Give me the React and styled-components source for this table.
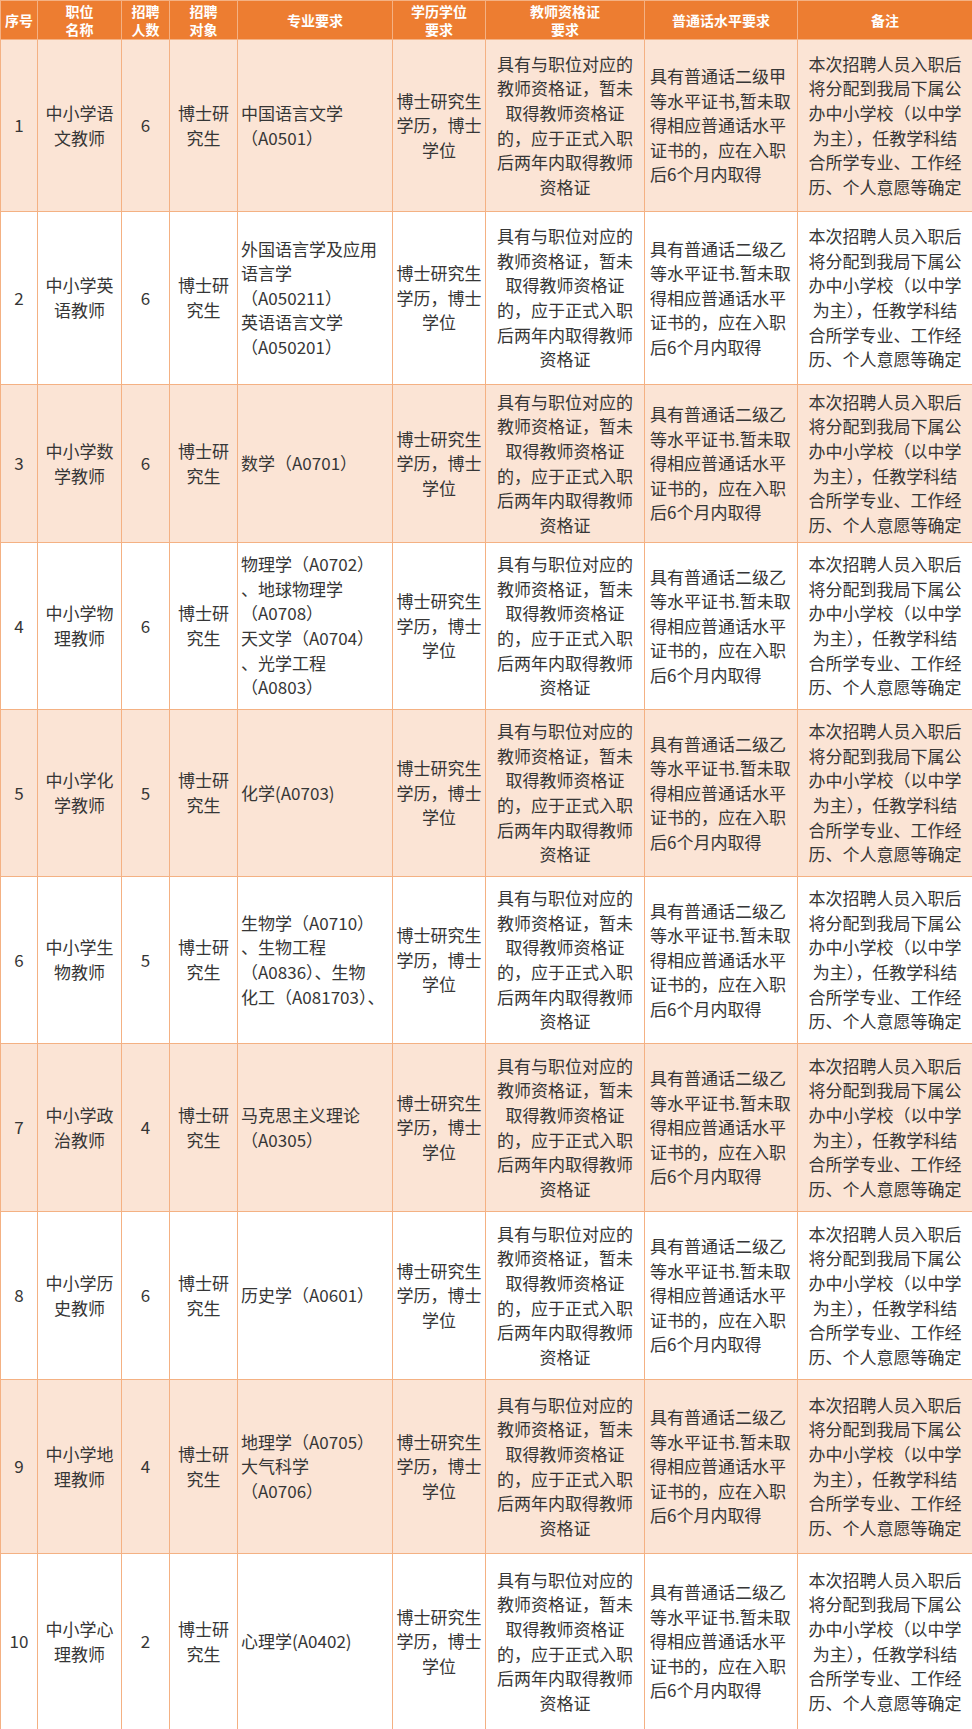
import React from "react";
import styled, { createGlobalStyle } from "styled-components";

const GlobalStyle = createGlobalStyle`
    html, body {
        margin: 0;
        padding: 0;
        background: #ffffff;
    }
    body {
        font-family: "Noto Sans CJK SC", "Noto Sans", sans-serif;
    }
`;

const Table = styled.table`
    width: 972px;
    border-collapse: collapse;
    table-layout: fixed;
`;

const Col = styled.col`
    width: ${(p) => p.$w}px;
`;

const HeadCell = styled.th`
    height: 38px;
    padding: 0 2px;
    background: #ed7d31;
    border: 1px solid #f4b183;
    color: #ffffff;
    font-size: 14px;
    font-weight: 700;
    line-height: 18px;
    text-align: center;
    vertical-align: middle;
`;

const Row = styled.tr`
    height: ${(p) => p.$h}px;
    background: ${(p) => (p.$shade ? "#fbe4d5" : "#ffffff")};
`;

const Cell = styled.td`
    padding: ${(p) => p.$pad || "0 3px"};
    border: 1px solid #f4b183;
    color: #363636;
    font-size: 17px;
    line-height: 24.6px;
    text-align: ${(p) => p.$align || "center"};
    vertical-align: middle;
    white-space: nowrap;
    overflow: visible;
`;

const Line = styled.span`
    display: block;
`;

const Lines = ({ items }) => (
    <>
        {items.map((t, i) => (
            <Line key={i}>{t}</Line>
        ))}
    </>
);

// 공통 문구
const EDU = ["博士研究生", "学历，博士", "学位"];
const CERT = [
    "具有与职位对应的",
    "教师资格证，暂未",
    "取得教师资格证",
    "的，应于正式入职",
    "后两年内取得教师",
    "资格证",
];
const NOTE = [
    "本次招聘人员入职后",
    "将分配到我局下属公",
    "办中小学校（以中学",
    "为主），任教学科结",
    "合所学专业、工作经",
    "历、个人意愿等确定",
];
const mandarin = (level, sep) => [
    `具有普通话二级${level}`,
    `等水平证书${sep}暂未取`,
    "得相应普通话水平",
    "证书的，应在入职",
    "后6个月内取得",
];

const HEADERS = [
    ["序号"],
    ["职位", "名称"],
    ["招聘", "人数"],
    ["招聘", "对象"],
    ["专业要求"],
    ["学历学位", "要求"],
    ["教师资格证", "要求"],
    ["普通话水平要求"],
    ["备注"],
];

const WIDTHS = [37, 84, 48, 68, 155, 93, 159, 153, 175];

const ROWS = [
    { h: 172, title: ["中小学语", "文教师"], count: "6", major: ["中国语言文学", "（A0501）"], level: "甲", sep: "," },
    { h: 173, title: ["中小学英", "语教师"], count: "6", major: ["外国语言学及应用", "语言学", "（A050211）", "英语语言文学", "（A050201）"] },
    { h: 158, title: ["中小学数", "学教师"], count: "6", major: ["数学（A0701）"] },
    { h: 167, title: ["中小学物", "理教师"], count: "6", major: ["物理学（A0702）", "、地球物理学", "（A0708）", "天文学（A0704）", "、光学工程", "（A0803）"] },
    { h: 167, title: ["中小学化", "学教师"], count: "5", major: ["化学(A0703)"] },
    { h: 167, title: ["中小学生", "物教师"], count: "5", major: ["生物学（A0710）", "、生物工程", "（A0836）、生物", "化工（A081703）、"] },
    { h: 168, title: ["中小学政", "治教师"], count: "4", major: ["马克思主义理论", "（A0305）"] },
    { h: 168, title: ["中小学历", "史教师"], count: "6", major: ["历史学（A0601）"] },
    { h: 174, title: ["中小学地", "理教师"], count: "4", major: ["地理学（A0705）", "大气科学", "（A0706）"] },
    { h: 176, title: ["中小学心", "理教师"], count: "2", major: ["心理学(A0402)"] },
];

const App = () => {
    return (
        <>
            <GlobalStyle />
            <Table>
                <colgroup>
                    {WIDTHS.map((w, i) => (
                        <Col key={i} $w={w} />
                    ))}
                </colgroup>
                <thead>
                    <tr>
                        {HEADERS.map((h, i) => (
                            <HeadCell key={i}>
                                <Lines items={h} />
                            </HeadCell>
                        ))}
                    </tr>
                </thead>
                <tbody>
                    {ROWS.map((r, i) => (
                        <Row key={i} $h={r.h} $shade={i % 2 === 0}>
                            <Cell>{i + 1}</Cell>
                            <Cell>
                                <Lines items={r.title} />
                            </Cell>
                            <Cell>{r.count}</Cell>
                            <Cell>
                                <Lines items={["博士研", "究生"]} />
                            </Cell>
                            <Cell $align="left" $pad="0 0 0 3px">
                                <Lines items={r.major} />
                            </Cell>
                            <Cell>
                                <Lines items={EDU} />
                            </Cell>
                            <Cell>
                                <Lines items={CERT} />
                            </Cell>
                            <Cell $align="left" $pad="0 0 0 5px">
                                <Lines items={mandarin(r.level || "乙", r.sep || ".")} />
                            </Cell>
                            <Cell>
                                <Lines items={NOTE} />
                            </Cell>
                        </Row>
                    ))}
                </tbody>
            </Table>
        </>
    );
};

export default App;
